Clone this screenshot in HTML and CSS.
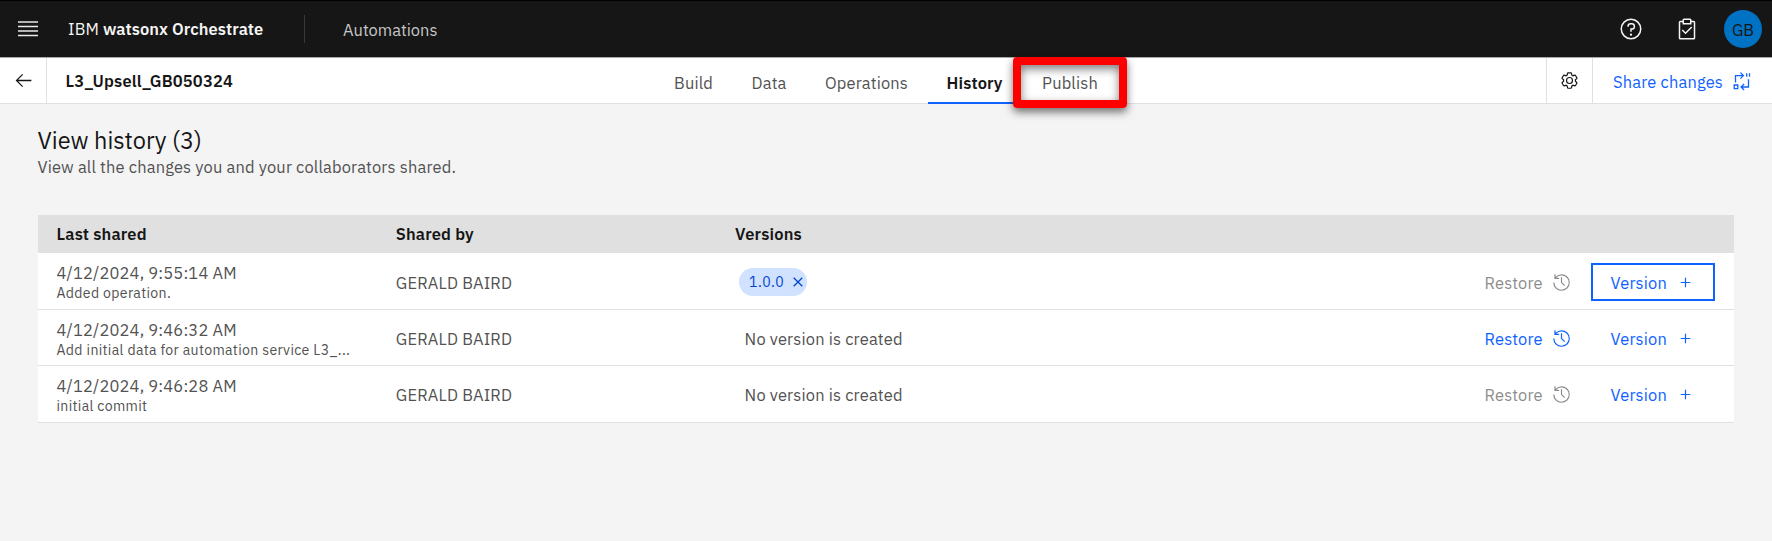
FILE: index.html
```html
<!DOCTYPE html>
<html lang="en">
<head>
<meta charset="utf-8">
<title>IBM watsonx Orchestrate</title>
<link rel="stylesheet" href="styles.css">
</head>
<body>
<svg class="defs" aria-hidden="true">
  <symbol id="restore" viewBox="0 0 32 32"><path d="M20.59 22 15 16.41V7h2v8.58l5 5.01L20.59 22z"/><path d="M16 2A13.94 13.94 0 0 0 6 6.23V2H4v8h8V8H7.08A12 12 0 1 1 4 16H2A14 14 0 1 0 16 2Z"/></symbol>
  <symbol id="add" viewBox="0 0 32 32"><path d="M17 15V8h-2v7H8v2h7v7h2v-7h7v-2z"/></symbol>
</svg>
<header class="shell">
  <svg class="menu-icon" viewBox="0 0 20 16"><path d="M0 1h20M0 5.500h20M0 10h20M0 14.500h20"/></svg>
  <div class="brand"><span class="brand-ibm">IBM</span> <b>watsonx Orchestrate</b></div>
  <div class="shell-app">Automations</div>
  <div class="shell-actions">
    <svg class="help" viewBox="0 0 32 32"><path d="M16 2a14 14 0 1 0 14 14A14 14 0 0 0 16 2Zm0 26a12 12 0 1 1 12-12 12 12 0 0 1-12 12Z"/><circle cx="16" cy="23.500" r="1.500"/><path d="M17 8h-1.500A4.490 4.490 0 0 0 11 12.500V13h2v-.5a2.500 2.500 0 0 1 2.500-2.500H17a2.500 2.500 0 0 1 0 5h-2v4.500h2V17a4.500 4.500 0 0 0 0-9Z"/></svg>
    <svg class="tasks" viewBox="0 0 32 32"><path d="m14 20.180-3.590-3.590L9 18l5 5 9-9-1.410-1.410z"/><path d="M25 5h-3V4a2 2 0 0 0-2-2h-8a2 2 0 0 0-2 2v1H7a2 2 0 0 0-2 2v21a2 2 0 0 0 2 2h18a2 2 0 0 0 2-2V7a2 2 0 0 0-2-2ZM12 4h8v4h-8Zm13 24H7V7h3v3h12V7h3Z"/></svg>
    <div class="avatar">GB</div>
  </div>
</header>
<nav class="toolbar">
  <div class="back"><svg viewBox="0 0 32 32"><path d="m14 26 1.410-1.410L7.830 17H28v-2H7.830l7.580-7.590L14 6 4 16z"/></svg></div>
  <h1 class="project">L3_Upsell_GB050324</h1>
  <div class="tabs">
    <div class="tab build">Build</div>
    <div class="tab data">Data</div>
    <div class="tab operations">Operations</div>
    <div class="tab history">History</div>
    <div class="tab publish">Publish<span class="highlight"></span></div>
  </div>
  <div class="settings"><svg viewBox="0 0 32 32"><path d="M27 16.760c0-.25 0-.5 0-.76s0-.51 0-.77l1.920-1.680A2 2 0 0 0 29.300 11L26.940 7a2 2 0 0 0-1.730-1 2 2 0 0 0-.64.1l-2.430.82a11.350 11.350 0 0 0-1.310-.75l-.51-2.520a2 2 0 0 0-2-1.610H13.640a2 2 0 0 0-2 1.610l-.51 2.520a11.480 11.480 0 0 0-1.320.75L7.430 6.060A2 2 0 0 0 6.790 6 2 2 0 0 0 5.060 7L2.700 11a2 2 0 0 0 .41 2.510L5 15.240c0 .25 0 .5 0 .76s0 .51 0 .77L3.110 18.450A2 2 0 0 0 2.700 21L5.060 25a2 2 0 0 0 1.730 1 2 2 0 0 0 .64-.1l2.430-.82a11.350 11.350 0 0 0 1.310.75l.51 2.520a2 2 0 0 0 2 1.610h4.720a2 2 0 0 0 2-1.610l.51-2.520a11.480 11.480 0 0 0 1.320-.75l2.420.82a2 2 0 0 0 .64.1 2 2 0 0 0 1.730-1L29.300 21a2 2 0 0 0-.41-2.510ZM25.210 24l-3.430-1.160a8.860 8.860 0 0 1-2.710 1.570L18.360 28H13.640l-.71-3.550a9.360 9.360 0 0 1-2.700-1.570L6.790 24 4.430 20l2.720-2.400a8.900 8.900 0 0 1 0-3.130L4.430 12 6.790 8l3.430 1.160a8.860 8.860 0 0 1 2.710-1.570L13.640 4h4.720l.71 3.550a9.360 9.360 0 0 1 2.700 1.570L25.210 8 27.570 12l-2.720 2.400a8.900 8.900 0 0 1 0 3.130L27.570 20Z"/><path d="M16 22a6 6 0 1 1 6-6 5.940 5.940 0 0 1-6 6Zm0-10a3.910 3.910 0 0 0-4 4 3.910 3.910 0 0 0 4 4 3.910 3.910 0 0 0 4-4 3.910 3.910 0 0 0-4-4Z"/></svg></div>
  <div class="share"><span>Share changes</span><svg viewBox="0 0 18 18"><path d="M2.500 10.600V3.600h7.800M7.400.6l3 3-3 3M1.200 13h3.600v3.600H1.200zM15.500 7.200v7.800H8.200M11.100 12l-3 3 3 3M13.700 1.200v3.600M16.500 1.200v3.600"/></svg></div>
</nav>
<main>
  <h2>View history (3)</h2>
  <p class="sub">View all the changes you and your collaborators shared.</p>
  <section class="table">
    <div class="row head"><div class="last">Last shared</div><div class="by">Shared by</div><div class="ver">Versions</div></div>
    <div class="row">
      <div class="when"><div class="date">4/12/2024, 9:55:14 AM</div><div class="note">Added operation.</div></div>
      <div class="who">GERALD BAIRD</div>
      <div class="versions"><span class="tag"><span>1.0.0</span><svg viewBox="0 0 10 10"><path d="m.7.7 8.600 8.600M9.300.7.7 9.300"/></svg></span></div>
      <div class="restore off"><span>Restore</span><svg><use href="#restore"/></svg></div>
      <div class="version focus"><span>Version</span><svg><use href="#add"/></svg></div>
    </div>
    <div class="row">
      <div class="when"><div class="date">4/12/2024, 9:46:32 AM</div><div class="note">Add initial data for automation service L3_...</div></div>
      <div class="who">GERALD BAIRD</div>
      <div class="versions none">No version is created</div>
      <div class="restore"><span>Restore</span><svg><use href="#restore"/></svg></div>
      <div class="version"><span>Version</span><svg><use href="#add"/></svg></div>
    </div>
    <div class="row">
      <div class="when"><div class="date">4/12/2024, 9:46:28 AM</div><div class="note">initial commit</div></div>
      <div class="who">GERALD BAIRD</div>
      <div class="versions none">No version is created</div>
      <div class="restore off"><span>Restore</span><svg><use href="#restore"/></svg></div>
      <div class="version"><span>Version</span><svg><use href="#add"/></svg></div>
    </div>
  </section>
</main>
</body>
</html>
```
FILE: styles.css
```css
* { box-sizing: border-box; }
body { margin: 0; height: 541px; overflow: hidden; background: #f4f4f4; color: #525252; font: 16.470px/20px "IBM Plex Sans", Roboto, sans-serif; letter-spacing: .16px; white-space: nowrap; }
svg { display: block; flex: none; fill: currentColor; }
h1, h2, p { margin: 0; }
.defs { display: none; }
.shell { display: flex; align-items: center; height: 57px; padding-left: 18px; background: #161616; border-top: 1px solid #000; color: #f4f4f4; }
.menu-icon { width: 20px; height: 16px; stroke: #e8e8e8; stroke-width: 1.300; }
.brand { width: 237px; height: 28px; line-height: 29px; margin-left: 30px; border-right: 1px solid #393939; letter-spacing: .08px; }
.brand b { font-weight: 600; }
.shell-app { margin-left: 38px; padding-top: 1px; color: #c6c6c6; letter-spacing: 0; }
.shell-actions { display: flex; align-items: center; margin-left: auto; padding-right: 10px; }
.help { width: 24px; height: 24px; margin-right: 32px; }
.tasks { width: 24px; height: 24px; margin-right: 25px; }
.avatar { width: 38px; height: 38px; border-radius: 50%; background: #0072c3; color: #161616; text-align: center; line-height: 40px; letter-spacing: 0; }
.toolbar { display: flex; height: 47px; background: #fff; border-top: 1px solid #a8a8a8; border-bottom: 1px solid #e0e0e0; }
.back { display: flex; align-items: center; width: 47px; padding-left: 13px; border-right: 1px solid #e0e0e0; color: #161616; }
.back svg { width: 21px; height: 21px; }
.project { width: 608px; padding-left: 18.500px; line-height: 47px; font-size: 16.470px; font-weight: 600; color: #161616; }
.tabs { display: flex; flex: 1; gap: 1.500px; }
.tab { height: 46px; padding-left: 19px; line-height: 50px; border-bottom: 1.500px solid #e0e0e0; }
.build { width: 76px; }
.data { width: 72px; }
.operations { width: 120px; }
.history { width: 85px; border-bottom: 2px solid #0f62fe; font-weight: 600; color: #161616; }
.publish { position: relative; padding-left: 28px; width: 112px; border-color: transparent; }
.highlight { position: absolute; left: -1px; top: -1px; width: 114px; height: 51px; border: 8px solid #f00; border-radius: 4px; box-shadow: 0 4px 8px rgba(0,0,0,.55), inset 0 4px 10px rgba(0,0,0,.5); }
.settings { display: flex; align-items: center; justify-content: center; width: 47px; border: solid #e0e0e0; border-width: 0 1px; color: #161616; }
.settings svg { width: 19px; height: 19px; }
.share { display: flex; align-items: center; width: 179px; padding: 1px 0 0 20px; color: #0f62fe; }
.share span { width: 120px; padding-top: 1px; }
.share svg { width: 18px; height: 18px; overflow: visible; fill: none; stroke: currentColor; stroke-width: 1.300; }
main { padding: 22px 38px 0 37.500px; }
h2 { height: 31px; line-height: 28px; font-size: 23.500px; font-weight: 400; letter-spacing: 0; color: #161616; }
.sub { height: 58px; line-height: 21px; }
.table { border-bottom: 1px solid #e0e0e0; }
.row { display: flex; align-items: center; height: 56.400px; padding: 3px 19px 0; background: #fff; border-top: 1px solid #e0e0e0; }
.head { height: 37.500px; padding-top: 1px; background: #e0e0e0; border: 0; font-weight: 600; color: #161616; }
.head + .row { border-color: #fff; }
.last, .when { width: 339.300px; }
.by, .who { width: 339.300px; }
.date { line-height: 21px; }
.note { font-size: 14.100px; line-height: 18px; letter-spacing: .33px; }
.versions { flex: 1; padding-left: 4px; }
.none { padding-left: 9.500px; }
.tag { display: flex; align-items: center; width: 68px; height: 28px; margin-top: -1px; padding-left: 10px; border-radius: 14px; background: #d0e2ff; color: #0043ce; font-size: 14.100px; letter-spacing: .4px; }
.tag span { width: 44px; }
.tag svg { width: 10px; height: 10px; stroke: currentColor; stroke-width: 1.300; }
.restore, .version { display: flex; align-items: center; margin-top: -1px; color: #0f62fe; }
.restore { width: 106.500px; margin-left: -.5px; }
.restore span { width: 67.500px; padding-top: 1px; }
.restore svg { width: 19px; height: 19px; }
.off { color: #8d8d8d; }
.version { width: 124px; height: 38px; padding-left: 19.500px; }
.version span { width: 65.500px; padding-top: 1px; }
.version svg { width: 19px; height: 19px; }
.focus { box-shadow: inset 0 0 0 2px #0f62fe; }
```
